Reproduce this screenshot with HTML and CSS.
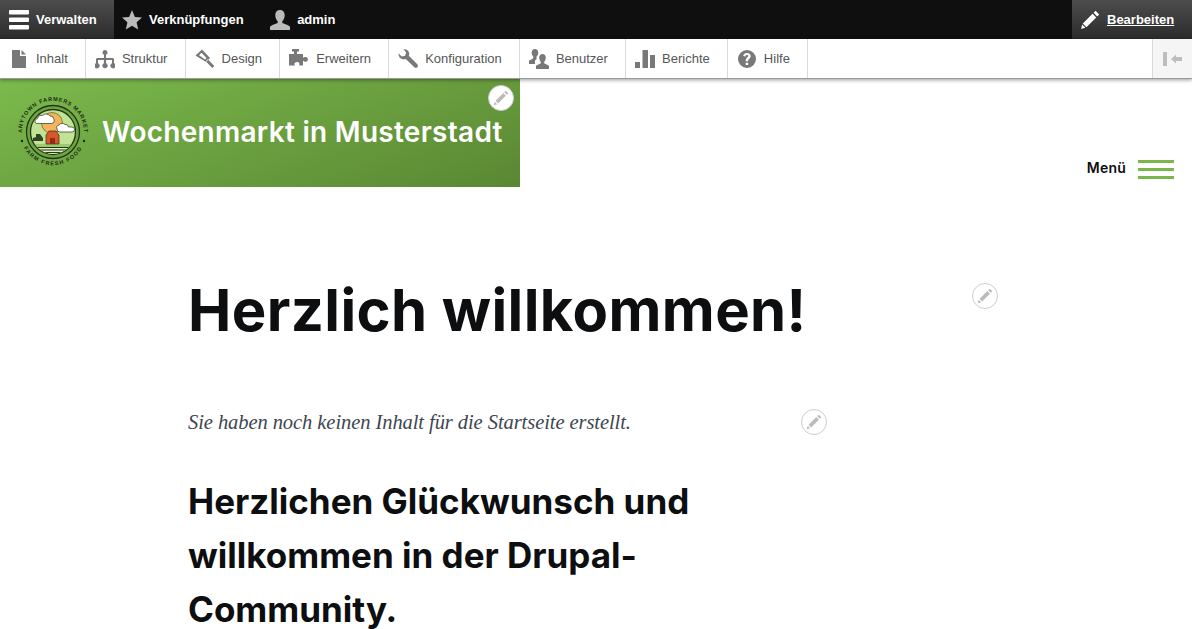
FILE: index.html
```html
<!DOCTYPE html>
<html lang="de">
<head>
  <meta charset="utf-8">
  <title>Wochenmarkt in Musterstadt</title>
  <link rel="stylesheet" href="styles.css">
</head>
<body>
  <div class="toolbar">
    <a class="bar-item is-active bar-manage">
      <svg class="bar-icon" viewBox="0 0 20 20"><path fill="#fff" d="M1 0h18a1 1 0 0 1 1 1v2.500a1 1 0 0 1-1 1H1a1 1 0 0 1-1-1V1a1 1 0 0 1 1-1zM1 7.600h18a1 1 0 0 1 1 1v2.400a1 1 0 0 1-1 1H1a1 1 0 0 1-1-1V8.600a1 1 0 0 1 1-1zM1 15h18a1 1 0 0 1 1 1v2.600a1 1 0 0 1-1 1H1a1 1 0 0 1-1-1V16a1 1 0 0 1 1-1z"/></svg>
      Verwalten
    </a>
    <a class="bar-item bar-shortcuts">
      <svg class="bar-icon" viewBox="0 0 20 20"><path fill="#bbb" d="M10 0l2.900 6.900 7.100.6-5.400 4.800 1.600 7.200L10 15.700l-6.200 3.800 1.600-7.200L0 7.500l7.100-.6z"/></svg>
      Verknüpfungen
    </a>
    <a class="bar-item bar-user">
      <svg class="bar-icon" viewBox="0 0 20 20"><path fill="#bbb" d="M10 0c3 0 4.700 2.200 4.700 5.200 0 2.500-1 4.500-2.200 5.800-.5.600-.4 1.900.4 2.300 2.500 1.100 6 2 7.100 3.400V20H0v-3.300c1.100-1.400 4.600-2.300 7.100-3.400.8-.4.900-1.700.4-2.300C6.300 9.700 5.300 7.700 5.300 5.200 5.300 2.200 7 0 10 0z"/></svg>
      admin
    </a>
    <a class="bar-item is-active bar-edit">
      <svg class="bar-icon" viewBox="0 0 20 20"><path fill="#fff" d="M15.600 0.800l3.600 3.600-2 2-3.600-3.600zM12.600 3.800l3.600 3.600L6.400 17.200l-3.600-3.600zM2.200 14.600l3.200 3.200-4.300 1.200z"/></svg>
      <span class="edit-label">Bearbeiten</span>
    </a>
  </div>

  <nav class="tray">
    <a class="tray-item">
      <svg class="tray-icon" viewBox="0 0 20 20"><path fill="#787878" d="M3 1h8v6h6v12H3zM12.500 1L17 5.500h-4.500z"/></svg>
      Inhalt
    </a>
    <a class="tray-item">
      <svg class="tray-icon" viewBox="0 0 20 20"><path fill="#787878" d="M10 1a2.500 2.500 0 0 1 1 4.800V9h6.500c.8 0 1.500.7 1.500 1.500v3.700a2.700 2.700 0 1 1-2 0V11h-5.900v3.200a2.700 2.700 0 1 1-2.200 0V11H3v3.200a2.700 2.700 0 1 1-2 0v-3.700C1 9.700 1.700 9 2.500 9H9V5.800A2.500 2.500 0 0 1 10 1z"/></svg>
      Struktur
    </a>
    <a class="tray-item">
      <svg class="tray-icon" viewBox="0 0 20 20"><path fill="#787878" fill-rule="evenodd" d="M7 .5L15 9l-4 4L.5 6.500zM4 6.300L10 10.500l1.500-1.500-5-5.300zM12.800 10.200L19.300 17l-2 2-6.600-6.700z"/></svg>
      Design
    </a>
    <a class="tray-item">
      <svg class="tray-icon" viewBox="0 0 20 20"><path fill="#787878" d="M3 0h7v2.500H8V5h6v4c.5-1 3-1.500 4-.500 1.500 1.500 1 4-1 4.300-1 .1-2.500-.3-3-1.300v5h-4c.8-.8.800-2.800-1-3.400-2-.5-4 .8-3.500 2.400.1.500.3.800.5 1H0V5h5V2.500H3z"/></svg>
      Erweitern
    </a>
    <a class="tray-item">
      <svg class="tray-icon" viewBox="0 0 20 20"><path fill="#787878" d="M5.500 0.300c2.800-.6 5.400 1.300 5.700 4 .1 1 0 1.700-.4 2.500l8.500 8.400c.8.800.8 2.200 0 3-.8.800-2.200.8-3 0L7.800 10c-1 .4-2 .5-3 .3C2 9.800.2 7.300.5 4.500l3.300 3.100 3.400-.8.900-3.400z"/></svg>
      Konfiguration
    </a>
    <a class="tray-item">
      <svg class="tray-icon" viewBox="0 0 20 20"><path fill="#787878" d="M6 0c2 0 3.300 1.500 3.300 3.600 0 1.500-.5 2.700-1.300 3.500-.7.800-.8 2.100-.1 2.700L6 11.600V15H0v-3c.5-1 3-1.800 4-2.500.5-.5.400-1.700-.2-2.400C3 6.200 2.600 5 2.600 3.600 2.600 1.500 4 0 6 0zM13.500 5c2 0 3.300 1.500 3.300 3.600 0 1.500-.5 2.800-1.300 3.800-.5.600-.5 1.800.1 2.200 1.200.8 3.600 1.500 4.400 2.400V20H7v-3c.8-.9 3.200-1.600 4.400-2.400.6-.4.600-1.600.1-2.200-.8-1-1.300-2.300-1.300-3.800C10.200 6.500 11.500 5 13.500 5z"/></svg>
      Benutzer
    </a>
    <a class="tray-item">
      <svg class="tray-icon" viewBox="0 0 20 20"><path fill="#787878" d="M0 13h5v6H0zM7.500 1H13v18H7.500zM15 6h5v13h-5z"/></svg>
      Berichte
    </a>
    <a class="tray-item">
      <svg class="tray-icon" viewBox="0 0 20 20"><path fill="#787878" fill-rule="evenodd" d="M10 1a9 9 0 1 1 0 18 9 9 0 0 1 0-18zM8.700 13.700v2.400h2.500v-2.400zM10 4c-2 0-3.500 1-3.800 3l2.300.4c.1-.9.700-1.400 1.400-1.400.8 0 1.300.5 1.300 1.100 0 1.200-2.600 1.700-2.500 4.800v.3h2.400v-.3c0-2 2.600-2.400 2.600-5C13.700 5.200 12.200 4 10 4z"/></svg>
      Hilfe
    </a>
    <button class="tray-toggle" type="button" aria-label="Seitenleiste">
      <svg width="20" height="16" viewBox="0 0 20 16"><path fill="#bdbdbd" d="M0 1h4v14H0zM8 8l5-4.500V6h6v4h-6v2.500z"/></svg>
    </button>
  </nav>

  <header class="site-header">
    <div class="branding">
      <svg class="logo" viewBox="0 0 72 72">
        <defs>
          <path id="arc-top" d="M6.700 46a31 31 0 1 1 58.600 0"/>
          <path id="arc-bottom" d="M6 50a33 33 0 0 0 60 0"/>
          <clipPath id="inner"><circle cx="36" cy="36" r="22"/></clipPath>
        </defs>
        <text class="logo-text"><textPath href="#arc-top" startOffset="50%" text-anchor="middle">ANYTOWN FARMERS MARKET</textPath></text>
        <text class="logo-text logo-text-low"><textPath href="#arc-bottom" startOffset="50%" text-anchor="middle">FARM FRESH FOOD</textPath></text>
        <circle cx="5" cy="45" r="1.200" fill="#1d2a16"/>
        <circle cx="67" cy="45" r="1.200" fill="#1d2a16"/>
        <circle cx="36" cy="36" r="26.500" fill="#6ca63e" stroke="#24351a" stroke-width="1.300"/>
        <circle cx="36" cy="36" r="22.500" fill="#c3e394" stroke="#24351a" stroke-width="1.300"/>
        <g clip-path="url(#inner)">
          <circle cx="35" cy="27" r="10.500" fill="#f4b35c" stroke="#24351a" stroke-width=".5"/>
          <rect x="14" y="48" width="44" height="4" fill="#9ccb6a"/>
          <rect x="14" y="51" width="44" height="10" fill="#dfeec3"/>
          <path d="M14 51.500h44M14 54h44M14 56.500h44M14 59h44" stroke="#24351a" stroke-width="1"/>
          <path d="M16 45v-3l3-1v-3h4l3 4v3z" fill="#2f4620"/>
          <path d="M29 48V39l3-4h7l3 4v9z" fill="#d9552b" stroke="#24351a" stroke-width=".7"/>
          <rect x="33" y="42" width="5" height="6" fill="#8c2f14"/>
        </g>
        <path d="M18.500 27a3 3 0 0 1 2-4.500 4 4 0 0 1 5-3 5 5 0 0 1 7.500.5 3 3 0 0 1 3.500 2.500 3 3 0 0 1-2 5H21a3 3 0 0 1-2.500-.5z" fill="#fff" stroke="#24351a" stroke-width=".7"/>
        <path d="M40 33a3 3 0 0 1 2-4 4 4 0 0 1 6-.5 3 3 0 0 1 3.500 2.500H55a2.500 2.500 0 0 1 0 5H43a3 3 0 0 1-3-3z" fill="#fff" stroke="#24351a" stroke-width=".7"/>
      </svg>
      <a class="site-name">Wochenmarkt in Musterstadt</a>
      <span class="ctx-btn ctx-branding"><svg viewBox="0 0 14 14"><path fill="#bbb" d="M10.700 1.300l2 2-1.200 1.200-2-2zM8.800 3.200l2 2-6 6-2-2zM2.100 10l1.900 1.900-2.700.8z"/></svg></span>
    </div>
    <div class="menu-toggle">
      <span class="menu-label">Menü</span>
      <span class="menu-bars"><i></i><i></i><i></i></span>
    </div>
  </header>

  <main class="content">
    <div class="title-block">
      <h1>Herzlich willkommen!</h1>
      <span class="ctx-btn ctx-title"><svg viewBox="0 0 14 14"><path fill="#bbb" d="M10.700 1.300l2 2-1.200 1.200-2-2zM8.800 3.200l2 2-6 6-2-2zM2.100 10l1.900 1.900-2.700.8z"/></svg></span>
    </div>
    <div class="body-block">
      <p class="lead">Sie haben noch keinen Inhalt für die Startseite erstellt.</p>
      <span class="ctx-btn ctx-body"><svg viewBox="0 0 14 14"><path fill="#bbb" d="M10.700 1.300l2 2-1.200 1.200-2-2zM8.800 3.200l2 2-6 6-2-2zM2.100 10l1.900 1.900-2.700.8z"/></svg></span>
      <h2>Herzlichen Glückwunsch und willkommen in der Drupal-Community.</h2>
    </div>
  </main>
</body>
</html>
```

FILE: styles.css
```css
* { box-sizing: border-box; }
html, body { height: 100%; }
body {
  margin: 0;
  overflow: hidden;
  background: #fff;
  color: #0d0e10;
  font-family: "Liberation Sans", Arial, sans-serif;
}

/* top black bar */
.toolbar {
  display: flex;
  height: 39px;
  background: #0f0f0f;
}
.bar-item {
  display: flex;
  align-items: center;
  gap: 7px;
  color: #fff;
  font-size: 13px;
  font-weight: bold;
}
.bar-icon { width: 20px; height: 20px; flex: none; }
.bar-manage { width: 114px; padding-left: 9px; }
.bar-shortcuts { padding-left: 8px; }
.bar-user { padding-left: 26.5px; }
.bar-edit { margin-left: auto; width: 120px; padding-left: 8px; }
.is-active { background: linear-gradient(to bottom, #4d4d4d, #2b2b2b); }
.edit-label { text-decoration: underline; }

/* second bar with the admin menu */
.tray {
  position: relative;
  z-index: 1;
  display: flex;
  height: 40px;
  background: #fff;
  border-bottom: 1px solid #9a9a9a;
  box-shadow: 0 1px 4px rgba(0, 0, 0, 0.4);
}
.tray-item {
  display: flex;
  align-items: center;
  gap: 7px;
  padding: 0 17.12px 0 9px;
  border-right: 1px solid #d9d9d9;
  color: #565656;
  font-size: 13px;
}
.tray-icon { width: 20px; height: 20px; flex: none; }
.tray-toggle {
  margin-left: auto;
  width: 40px;
  padding: 0 0 0 10px;
  display: flex;
  align-items: center;
  background: #f5f5f5;
  border: 0;
  border-left: 1px solid #d9d9d9;
}

/* header */
.site-header {
  display: flex;
  justify-content: space-between;
  height: 108px;
}
.branding {
  position: relative;
  display: flex;
  align-items: center;
  width: 520px;
  padding-left: 17px;
  background: linear-gradient(160deg, #7bba4c, #5a8733);
}
.logo { width: 72px; height: 72px; flex: none; margin-bottom: 2px; }
.logo-text {
  font-family: "Liberation Sans", Arial, sans-serif;
  font-size: 5.5px;
  font-weight: bold;
  letter-spacing: 0.8px;
  fill: #1d2a16;
}
.logo-text-low { letter-spacing: 1.2px; }
.site-name {
  margin: 0 0 2px 13px;
  color: #fff;
  font-family: Inter, "Liberation Sans", sans-serif;
  font-size: 28px;
  font-weight: 600;
  letter-spacing: 0.28px;
  white-space: nowrap;
}
.menu-toggle {
  display: flex;
  align-items: center;
  align-self: flex-end;
  gap: 12px;
  margin: 0 18px 8px 0;
}
.menu-label {
  padding-bottom: 3px;
  font-family: Inter, "Liberation Sans", sans-serif;
  font-size: 14px;
  font-weight: 600;
  letter-spacing: 0.2px;
}
.menu-bars {
  display: flex;
  flex-direction: column;
  gap: 5px;
  width: 36px;
}
.menu-bars i { display: block; height: 3px; background: #7ab648; }

/* the round pencil buttons */
.ctx-btn {
  position: absolute;
  display: flex;
  align-items: center;
  justify-content: center;
  width: 26px;
  height: 26px;
  background: #fff;
  border: 1px solid #ccc;
  border-radius: 50%;
}
.ctx-btn svg { width: 18px; height: 18px; }
.ctx-branding { top: 6px; right: 6px; }
.ctx-title { top: 96px; right: 6px; }
.ctx-body { top: 0; right: 1px; }

/* page content */
.content { padding-left: 188px; }
.title-block {
  position: relative;
  width: 816px;
  padding-top: 92px;
}
h1 {
  margin: 0;
  font-family: Inter, "Liberation Sans", sans-serif;
  font-size: 58px;
  font-weight: 700;
  letter-spacing: 0.4px;
  line-height: 62px;
}
.body-block {
  position: relative;
  width: 640px;
  margin-top: 68px;
}
.lead {
  margin: 0;
  height: 26px;
  color: #3d4650;
  font-family: "Liberation Serif", serif;
  font-size: 20.5px;
  font-style: italic;
  letter-spacing: -0.07px;
  line-height: 26px;
}
h2 {
  margin: 39px 0 0;
  font-family: Inter, "Liberation Sans", sans-serif;
  font-size: 35px;
  font-weight: 700;
  line-height: 54px;
}
```
